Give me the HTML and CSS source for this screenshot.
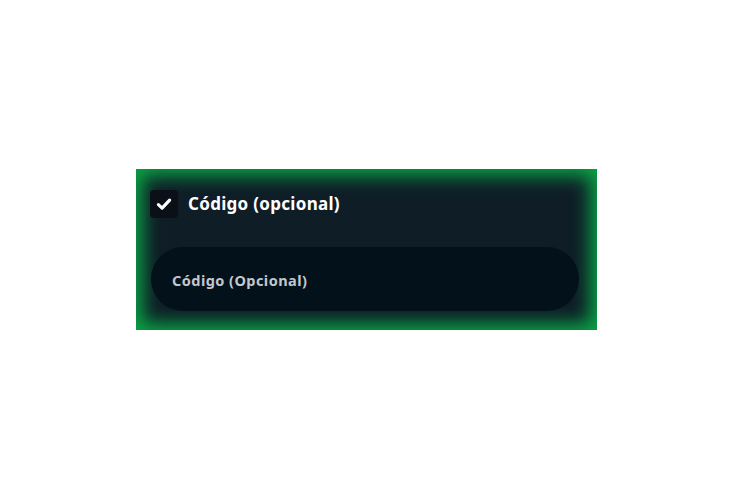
FILE: index.html
```html
<!DOCTYPE html>
<html lang="es">
<head>
<meta charset="utf-8">
<link rel="stylesheet" href="styles.css">
</head>
<body>
<div class="panel">
  <label class="check-row">
    <span class="checkbox">
      <svg viewBox="0 0 16 16" width="18" height="18"><path d="M3 8.6l3.3 3.1L13 4.6" fill="none" stroke="#fff" stroke-width="2.8" stroke-linecap="round" stroke-linejoin="round"/></svg>
    </span>
    <span class="check-label">Código (opcional)</span>
  </label>
  <div class="field">
    <span class="placeholder">Código (Opcional)</span>
  </div>
</div>
</body>
</html>
```
FILE: styles.css
```css
html, body {
  margin: 0;
  background: #ffffff;
}
body {
  padding: 169px 0 0 136px;
  font-family: "Noto Sans", "Open Sans", sans-serif;
}
.panel {
  width: 461px;
  height: 161px;
  box-sizing: border-box;
  background: #0f1d27;
  box-shadow: inset 0 0 18px 7px #0aa446;
  padding: 21px 18px 0 14px;
}
.check-row {
  display: flex;
  align-items: center;
  gap: 10px;
  height: 28px;
}
.checkbox {
  width: 28px;
  height: 28px;
  border-radius: 4px;
  background: #0a0f18;
  display: flex;
  align-items: center;
  justify-content: center;
}
.check-label {
  color: #ffffff;
  font-weight: 700;
  font-size: 17px;
  letter-spacing: 0.3px;
  margin-top: -2px;
}
.field {
  margin: 29px 0 0 1px;
  height: 64px;
  border-radius: 32px;
  background: #03111b;
  display: flex;
  align-items: center;
  padding-left: 21px;
}
.placeholder {
  color: #c3c7ce;
  font-weight: 700;
  font-size: 14.5px;
  letter-spacing: 0.45px;
  margin-top: 2px;
}
```
